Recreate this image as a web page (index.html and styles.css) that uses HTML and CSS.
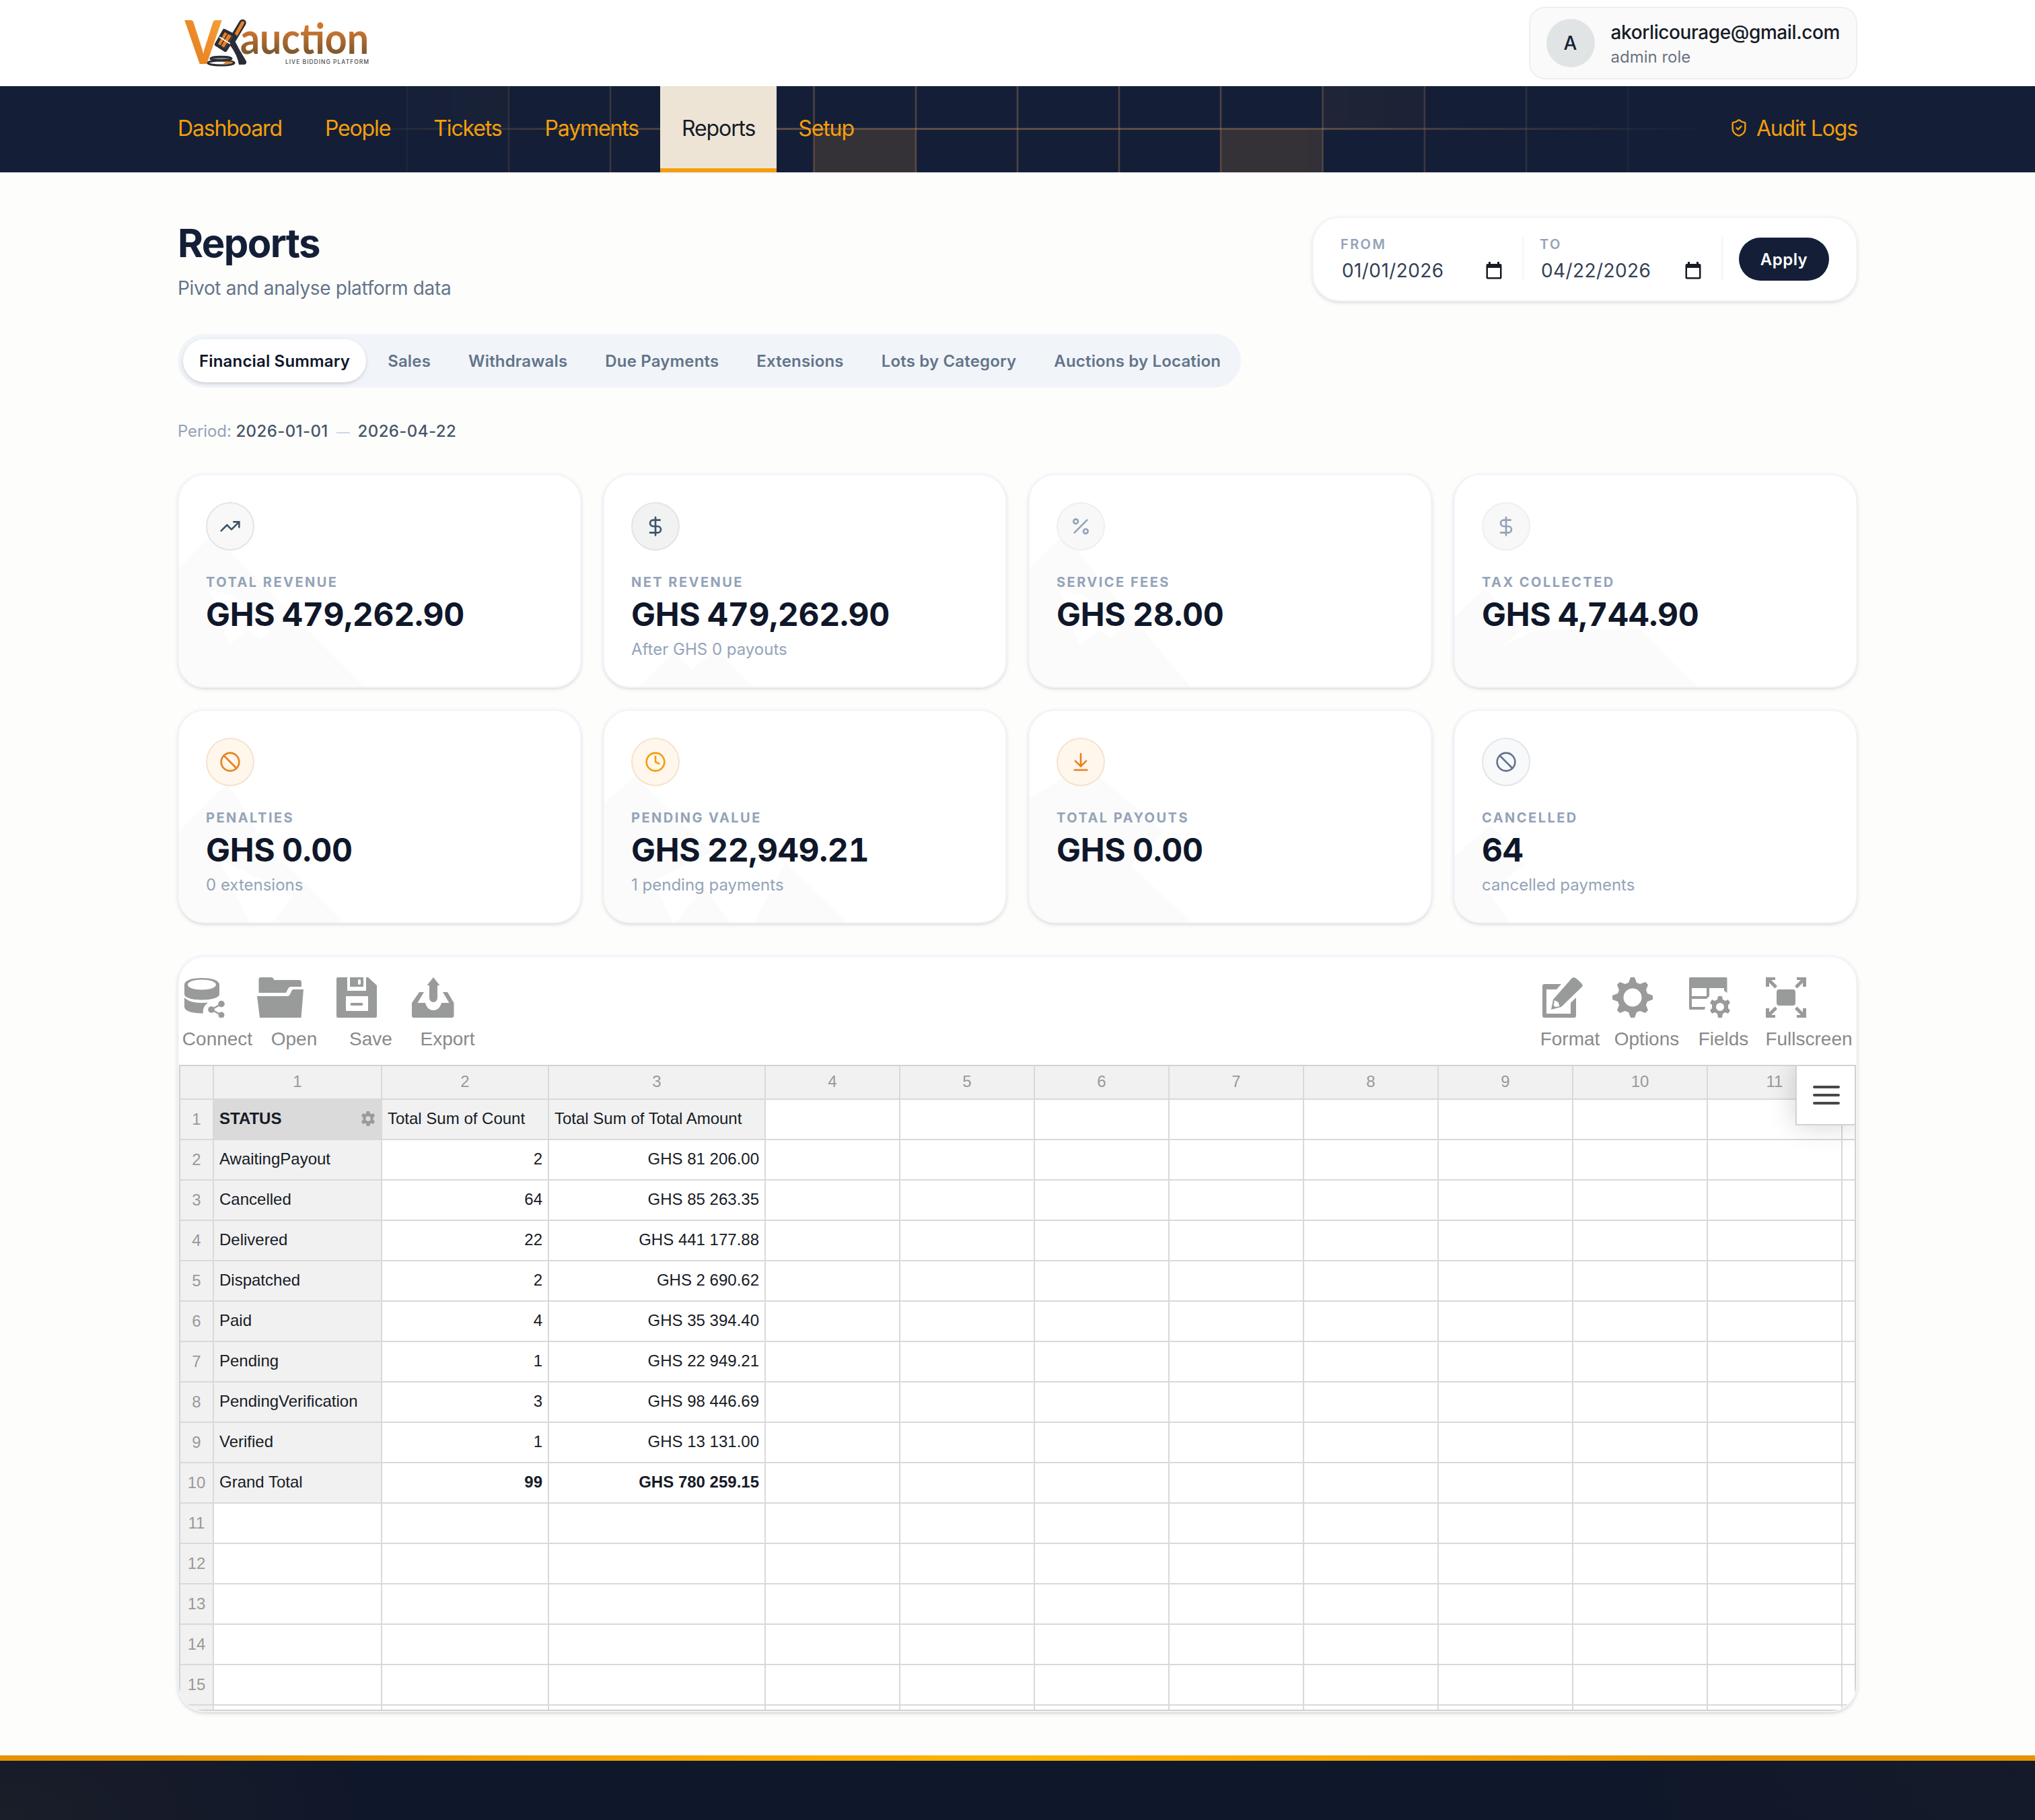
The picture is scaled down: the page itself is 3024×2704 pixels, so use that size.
FILE: index.html
```html
<!DOCTYPE html>
<html lang="en">
<head>
<meta charset="utf-8">
<title>VKauction – Reports</title>
<link rel="stylesheet" href="styles.css">
</head>
<body>
<svg width="0" height="0" class="defs">
  <defs>
    <linearGradient id="gradV" x1="0" y1="1" x2="1" y2="0"><stop offset="0" stop-color="#e07a1c"/><stop offset=".6" stop-color="#f0902c"/><stop offset="1" stop-color="#f6a63c"/></linearGradient>
    <linearGradient id="gradWord" x1="0" y1="0" x2="0" y2="1"><stop offset=".35" stop-color="#cf772f"/><stop offset=".85" stop-color="#76552f"/></linearGradient>
    <symbol id="dollar" viewBox="0 0 24 24"><path d="M12 2v20M17 5H9.5a3.5 3.5 0 0 0 0 7h5a3.5 3.5 0 0 1 0 7H6"/></symbol>
    <symbol id="ban" viewBox="0 0 24 24"><circle cx="12" cy="12" r="10"/><path d="M4.9 4.9l14.2 14.2"/></symbol>
    <symbol id="calendar" viewBox="0 0 24 26"><path fill-rule="evenodd" d="M4 0h3v3h10V0h3v3h1.500a2 2 0 0 1 2 2v18.500a2 2 0 0 1-2 2h-19a2 2 0 0 1-2-2V5a2 2 0 0 1 2-2H4zM3 9v14h18V9z"/></symbol>
  </defs>
</svg>

<header class="topbar">
  <div class="wrap topbar-row">
    <svg class="logo" width="300" height="96" viewBox="0 -8 300 96">
      <text x="11" y="75" class="logo-v" textLength="54" lengthAdjust="spacingAndGlyphs" fill="url(#gradV)">V</text>
      <path d="M77 42 L84 39 Q92 55 102 71 Q103 76 98 76 L91 76 Q89 62 77 46 Z" fill="#2b2d36"/>
      <path d="M96.500 14 L82 38" stroke="#2b2d36" stroke-width="10.500" stroke-linecap="round"/>
      <path d="M96.500 14 L87 31" stroke="#e5822a" stroke-width="5" stroke-linecap="round"/>
      <path d="M69 25 L85 33 L71 55 L57 46 Z" fill="#e5822a" stroke="#2b2d36" stroke-width="4.500" stroke-linejoin="round"/>
      <path d="M75 29 L63 50 M81 33 L69 52" stroke="#2b2d36" stroke-width="1.500"/>
      <path d="M62 35 L78 45" stroke="#fff" stroke-width="1.800"/>
      <ellipse cx="64.500" cy="73.500" rx="19.500" ry="3.500" fill="#fff" stroke="#2b2d36" stroke-width="3"/>
      <path d="M66 76q14 0 16-4l-9-1z" fill="#e5822a"/>
      <ellipse cx="64.500" cy="67" rx="15.500" ry="2.800" fill="#7c7e80" stroke="#2b2d36" stroke-width="3"/>
      <text x="93" y="60" class="logo-word" textLength="191" lengthAdjust="spacingAndGlyphs" fill="url(#gradWord)">auction</text>
      <text x="160" y="75" class="logo-tag" textLength="124">LIVE BIDDING PLATFORM</text>
    </svg>
    <div class="user">
      <div class="avatar">A</div>
      <div class="user-text"><div class="user-mail">akorlicourage@gmail.com</div><div class="user-role">admin role</div></div>
    </div>
  </div>
</header>

<nav class="nav">
  <svg class="nav-grid" viewBox="0 0 3024 128" preserveAspectRatio="none">
    <defs>
      <linearGradient id="fadeX" x1="0" x2="1"><stop offset=".15" stop-color="#fff" stop-opacity="0"/><stop offset=".38" stop-color="#fff"/><stop offset=".64" stop-color="#fff"/><stop offset=".84" stop-color="#fff" stop-opacity="0"/></linearGradient>
      <mask id="fade"><rect width="3024" height="128" fill="url(#fadeX)"/></mask>
    </defs>
    <g mask="url(#fade)">
      <g fill="#f9a23a" fill-opacity=".14"><rect x="1210" y="65" width="151" height="63"/><rect x="1814" y="65" width="151" height="63"/></g>
      <g fill="#f9a23a" fill-opacity=".05"><rect x="605" y="0" width="151" height="63"/><rect x="1966" y="0" width="151" height="63"/></g>
      <path d="M605 0v128M756 0v128M907 0v128M1058 0v128M1209.500 0v128M1361 0v128M1512 0v128M1663 0v128M1814 0v128M1965.500 0v128M2117 0v128M2268 0v128M2419 0v128" stroke="#c08a5a" stroke-opacity=".34" stroke-width="2.500" fill="none"/>
      <path d="M0 63.500h3024" stroke="#c08a5a" stroke-opacity=".42" stroke-width="3"/>
    </g>
  </svg>
  <div class="wrap nav-row">
    <a class="nav-link">Dashboard</a><a class="nav-link">People</a><a class="nav-link">Tickets</a><a class="nav-link">Payments</a><a class="nav-link active">Reports</a><a class="nav-link">Setup</a>
    <a class="audit"><svg width="28" height="28" viewBox="0 0 24 24" fill="none" stroke="currentColor" stroke-width="2" stroke-linecap="round" stroke-linejoin="round"><path d="M20 13c0 5-3.500 7.500-7.660 8.950a1 1 0 0 1-.67-.01C7.500 20.500 4 18 4 13V6a1 1 0 0 1 1-1c2 0 4.500-1.200 6.240-2.720a1.170 1.170 0 0 1 1.520 0C14.510 3.810 17 5 19 5a1 1 0 0 1 1 1z"/><path d="m9 12 2 2 4-4"/></svg>Audit Logs</a>
  </div>
</nav>

<main class="wrap main">
  <section class="head">
    <div><h1 class="title">Reports</h1><p class="subtitle">Pivot and analyse platform data</p></div>
    <div class="range">
      <div class="field"><div class="field-label">FROM</div><div class="field-value"><span>01/01/2026</span><svg width="24" height="26"><use href="#calendar"/></svg></div></div>
      <i class="rule"></i>
      <div class="field"><div class="field-label">TO</div><div class="field-value"><span>04/22/2026</span><svg width="24" height="26"><use href="#calendar"/></svg></div></div>
      <i class="rule"></i>
      <button class="apply">Apply</button>
    </div>
  </section>

  <div class="tabs">
    <a class="tab on">Financial Summary</a><a class="tab">Sales</a><a class="tab">Withdrawals</a><a class="tab">Due Payments</a><a class="tab">Extensions</a><a class="tab">Lots by Category</a><a class="tab">Auctions by Location</a>
  </div>

  <p class="period">Period: <b>2026-01-01</b><span class="dash">—</span><b>2026-04-22</b></p>

  <section class="cards">
    <article class="card hills-a"><div class="badge slate"><svg class="ico" viewBox="0 0 24 24"><path d="M22 7l-8.500 8.500-5-5L2 17"/><path d="M16 7h6v6"/></svg></div><div class="label">TOTAL REVENUE</div><div class="value">GHS 479,262.90</div></article>
    <article class="card hills-b"><div class="badge slate deep"><svg class="ico"><use href="#dollar"/></svg></div><div class="label">NET REVENUE</div><div class="value">GHS 479,262.90</div><div class="note">After GHS 0 payouts</div></article>
    <article class="card hills-c"><div class="badge mute"><svg class="ico" viewBox="0 0 24 24"><path d="M19 5L5 19"/><circle cx="6.500" cy="6.500" r="2.500"/><circle cx="17.500" cy="17.500" r="2.500"/></svg></div><div class="label">SERVICE FEES</div><div class="value">GHS 28.00</div></article>
    <article class="card hills-d"><div class="badge mute"><svg class="ico"><use href="#dollar"/></svg></div><div class="label">TAX COLLECTED</div><div class="value">GHS 4,744.90</div></article>
    <article class="card hills-e"><div class="badge orange"><svg class="ico"><use href="#ban"/></svg></div><div class="label">PENALTIES</div><div class="value">GHS 0.00</div><div class="note">0 extensions</div></article>
    <article class="card hills-f"><div class="badge orange amber"><svg class="ico" viewBox="0 0 24 24"><circle cx="12" cy="12" r="10"/><path d="M12 6v6l4 2"/></svg></div><div class="label">PENDING VALUE</div><div class="value">GHS 22,949.21</div><div class="note">1 pending payments</div></article>
    <article class="card hills-g"><div class="badge orange"><svg class="ico" viewBox="0 0 24 24"><path d="M12 17V3M6 11l6 6 6-6M5 21h14"/></svg></div><div class="label">TOTAL PAYOUTS</div><div class="value">GHS 0.00</div></article>
    <article class="card hills-h"><div class="badge gray"><svg class="ico"><use href="#ban"/></svg></div><div class="label">CANCELLED</div><div class="value">64</div><div class="note">cancelled payments</div></article>
  </section>

  <section class="pivot">
    <div class="toolbar">
      <a class="tool"><svg width="80" height="60" viewBox="0 0 80 60"><path fill-rule="evenodd" d="M8 11C8 5 18 1 34 1s26 4 26 10v14c0 5-11 8.500-26 8.500S8 30 8 25zM34 3.500c-12 0-21 3-21 7.500s9 7.500 21 7.500 21-3 21-7.500-9-7.500-21-7.500z"/><path d="M8 30c4 5 14 8 26 8l9-.5c-6 5-8 10-7 16C20 54 8 50 8 44z"/><circle cx="48" cy="48" r="4.800"/><circle cx="63" cy="39.500" r="4.800"/><circle cx="63" cy="56" r="4.500"/><path d="M63 39.500L48 48l15 8" fill="none" stroke="#999b9a" stroke-width="2.500"/></svg><span>Connect</span></a>
      <a class="tool"><svg width="80" height="60" viewBox="0 0 80 60"><path d="M4.500 23V3a3 3 0 0 1 3-3H22c3 0 5 1 5 4h37c3 0 4 1 4 4v6H53c-3 0-4 1-5 3l-3 6z"/><path d="M2 28h45c2 0 3-1 4-3l3-6c1-1 1-1 3-1h14l-3.500 42H6z"/></svg><span>Open</span></a>
      <a class="tool"><svg width="80" height="60" viewBox="0 0 80 60"><path fill-rule="evenodd" d="M8 0h14v20h28V0h3l13 12v46a2 2 0 0 1-2 2H8a2 2 0 0 1-2-2V2a2 2 0 0 1 2-2zm13 28a1 1 0 0 0-1 1v20a1 1 0 0 0 1 1h31a1 1 0 0 0 1-1V29a1 1 0 0 0-1-1z"/><path fill-rule="evenodd" d="M26 0h20v14H26zM40 3a2 2 0 0 0-2 2v4a2 2 0 0 0 4 0V5a2 2 0 0 0-2-2z"/><rect x="26.500" y="38" width="19" height="4" rx="2"/></svg><span>Save</span></a>
      <a class="tool"><svg width="80" height="60" viewBox="0 0 80 60"><path d="M36 0l9.500 12H42v19a6 6 0 0 1-12 0V12h-3.500zM15 22h7l-9.500 16H24c2 7 6 11 12 11s10-4 12-11h11.500L50 22h7l9.500 16v19a3 3 0 0 1-3 3H7a3 3 0 0 1-3-3V38z"/></svg><span>Export</span></a>
      <div class="spacer"></div>
      <a class="tool"><svg width="80" height="60" viewBox="0 0 80 60"><path d="M19 10h25l-7 8H22v36h36V38l8-8v27a3 3 0 0 1-3 3H19a3 3 0 0 1-3-3V13a3 3 0 0 1 3-3z"/><path fill-rule="evenodd" d="M60 1c3-2 6 0 10 4s7 6 5 9L44 44l-15 4 3-15zM34 34l-1.500 8 3 2 6-1-2-6z"/></svg><span>Format</span></a>
      <a class="tool"><svg width="80" height="60" viewBox="0 0 80 60"><path fill-rule="evenodd" d="M33 0h6l3 8 5 2 8-3 4 4-3 8 2 5 8 3v6l-8 3-2 5 3 8-4 4-8-3-5 2-3 8h-6l-3-8-5-2-8 3-4-4 3-8-2-5-8-3v-6l8-3 2-5-3-8 4-4 8 3 5-2zM36 16.500a13.500 13.500 0 1 0 0 27 13.500 13.500 0 0 0 0-27z"/></svg><span>Options</span></a>
      <a class="tool"><svg width="80" height="60" viewBox="0 0 80 60"><path fill-rule="evenodd" d="M7.500 0H61a1.500 1.500 0 0 1 1.500 1.500V23L58 20v-4H36v12l-4 4H10v12h20l-1 4H7.500A1.500 1.500 0 0 1 6 46.500v-45A1.500 1.500 0 0 1 7.500 0zM10 16v12h22V16z"/><path fill-rule="evenodd" d="M49 28h6l1 5 4 2 4-2 3 5-3 3v5l3 3-3 5-4-2-4 2-1 6h-6l-1-6-4-2-4 2-3-5 3-3v-5l-3-3 3-5 4 2 4-2zM52 38a6 6 0 1 0 0 12 6 6 0 0 0 0-12z"/></svg><span>Fields</span></a>
      <a class="tool wide"><svg width="80" height="60" viewBox="0 0 80 60"><rect x="22" y="18" width="28" height="24" rx="4"/><path d="M6 0h14v4h-6l9 9-3.500 3.500L11 8v6H6zM66 0H52v4h6l-9 9 3.500 3.500L61 8v6h5zM6 60h14v-4h-6l9-9-3.500-3.500L11 52v-6H6zM66 60H52v-4h6l-9-9 3.500-3.500L61 52v-6h5z"/></svg><span>Fullscreen</span></a>
    </div>
    <div class="sheet">
      <table class="grid">
        <colgroup><col class="c0"><col class="c1"><col class="c2"><col class="c3"><col class="cn"><col class="cn"><col class="cn"><col class="cn"><col class="cn"><col class="cn"><col class="cn"><col class="cn"><col class="cl"></colgroup>
        <tr class="top"><th></th><th>1</th><th>2</th><th>3</th><th>4</th><th>5</th><th>6</th><th>7</th><th>8</th><th>9</th><th>10</th><th>11</th><th></th></tr>
        <tr><th>1</th><td class="status"><div class="status-in">STATUS<svg width="22" height="24" viewBox="0 0 24 24"><path fill="#999b9a" fill-rule="evenodd" d="M9.500 0h5l.6 3.600 2 1.100 3.400-1.400 2.500 4.400-2.800 2.300v4l2.800 2.300-2.500 4.400-3.400-1.400-2 1.100-.6 3.600h-5l-.6-3.600-2-1.100-3.400 1.400L1 16.300 3.800 14v-4L1 7.700l2.500-4.400 3.400 1.400 2-1.100zM12 8a4 4 0 1 0 0 8 4 4 0 0 0 0-8z"/></svg></div></td><td class="dim">Total Sum of Count</td><td class="dim">Total Sum of Total Amount</td><td class="blank" colspan="9"></td></tr>
        <tr><th>2</th><td class="dim">AwaitingPayout</td><td>2</td><td>GHS 81 206.00</td><td class="blank" colspan="9"></td></tr>
        <tr><th>3</th><td class="dim">Cancelled</td><td>64</td><td>GHS 85 263.35</td><td class="blank" colspan="9"></td></tr>
        <tr><th>4</th><td class="dim">Delivered</td><td>22</td><td>GHS 441 177.88</td><td class="blank" colspan="9"></td></tr>
        <tr><th>5</th><td class="dim">Dispatched</td><td>2</td><td>GHS 2 690.62</td><td class="blank" colspan="9"></td></tr>
        <tr><th>6</th><td class="dim">Paid</td><td>4</td><td>GHS 35 394.40</td><td class="blank" colspan="9"></td></tr>
        <tr><th>7</th><td class="dim">Pending</td><td>1</td><td>GHS 22 949.21</td><td class="blank" colspan="9"></td></tr>
        <tr><th>8</th><td class="dim">PendingVerification</td><td>3</td><td>GHS 98 446.69</td><td class="blank" colspan="9"></td></tr>
        <tr><th>9</th><td class="dim">Verified</td><td>1</td><td>GHS 13 131.00</td><td class="blank" colspan="9"></td></tr>
        <tr class="total"><th>10</th><td class="dim">Grand Total</td><td>99</td><td>GHS 780 259.15</td><td class="blank" colspan="9"></td></tr>
        <tr><th>11</th><td></td><td></td><td></td><td class="blank" colspan="9"></td></tr>
        <tr><th>12</th><td></td><td></td><td></td><td class="blank" colspan="9"></td></tr>
        <tr><th>13</th><td></td><td></td><td></td><td class="blank" colspan="9"></td></tr>
        <tr><th>14</th><td></td><td></td><td></td><td class="blank" colspan="9"></td></tr>
        <tr><th>15</th><td></td><td></td><td></td><td class="blank" colspan="9"></td></tr>
        <tr><th></th><td></td><td></td><td></td><td class="blank" colspan="9"></td></tr>
      </table>
      <div class="menu"><i></i><i></i><i></i></div>
    </div>
  </section>
</main>
<footer class="footer"></footer>
</body>
</html>
```

FILE: styles.css
```css
* { box-sizing: border-box; }
body { margin: 0; background: #fdfdfb; font-family: Inter, "Liberation Sans", sans-serif; height: 2704px; overflow: hidden; display: flex; flex-direction: column; }
h1, p { margin: 0; }
.defs { position: absolute; }
.wrap { width: 2496px; margin: 0 auto; }

.topbar { background: #fff; height: 128px; flex: none; }
.topbar-row { display: flex; justify-content: space-between; align-items: center; height: 128px; }
.logo { margin-top: -8px; overflow: visible; }
.logo-v { font: 900 90px Lato, sans-serif; }
.logo-word { font: 700 64px Lato, sans-serif; }
.logo-tag { font: 500 8.500px Inter, sans-serif; fill: #4a4c52; }
.user { display: flex; align-items: center; gap: 24px; height: 108px; padding: 0 24px; border: 2px solid #efefef; border-radius: 24px; background: #fafafa; }
.avatar { width: 72px; height: 72px; border-radius: 50%; background: #e0e4e4; color: #141f37; font-weight: 500; font-size: 28px; display: flex; align-items: center; justify-content: center; }
.user-text { padding-top: 2px; }
.user-mail { font-size: 28px; font-weight: 500; line-height: 40px; letter-spacing: -0.4px; color: #171b26; }
.user-role { font-size: 24px; line-height: 34px; color: #6b7280; }

.nav { position: relative; height: 128px; background: #141f37; flex: none; box-shadow: 0 2px 0 #f1f1f4; }
.nav-grid { position: absolute; inset: 0; width: 100%; height: 128px; }
.nav-row { position: relative; display: flex; height: 128px; }
.nav-link { padding: 0 32px; font-size: 32px; line-height: 126px; color: #f59e0b; letter-spacing: -1.130px; height: 128px; }
.nav-link:first-child { padding-left: 0; }
.nav-link.active { background: #ede4d6; color: #171b26; box-shadow: inset 0 -6px 0 #f59e0b; }
.audit { margin-left: auto; display: flex; align-items: center; gap: 12px; font-size: 32px; letter-spacing: -1.150px; color: #f59e0b; height: 124px; }

.main { padding-top: 66px; flex: none; }
.head { display: flex; justify-content: space-between; align-items: flex-end; height: 126px; }
.title { font-size: 58px; line-height: 72px; font-weight: 700; letter-spacing: -1.600px; color: #141f37; margin-bottom: 11px; }
.subtitle { font-size: 28px; line-height: 40px; letter-spacing: -0.320px; color: #64748b; }
.range { display: flex; align-items: center; gap: 24px; height: 126px; padding: 0 40px; border: 2px solid #f1f5f9; border-radius: 40px; background: #fff; box-shadow: 0 2px 6px rgba(0,0,0,.1), 0 2px 4px -2px rgba(0,0,0,.1); }
.field { width: 246px; }
.field-label { font-size: 20px; line-height: 30px; font-weight: 600; letter-spacing: .12em; color: #94a3b8; margin-bottom: 4px; }
.field-value { display: flex; justify-content: space-between; align-items: center; font-size: 28px; line-height: 40px; letter-spacing: .4px; color: #334155; padding: 0 6px 0 2px; }
.field-value svg { fill: #171b26; }
.rule { width: 2px; height: 64px; background: #f1f5f9; }
.apply { width: 134px; height: 64px; border: 0; border-radius: 32px; background: #141f37; color: #fff; font: 600 24px Inter, sans-serif; letter-spacing: .02em; padding: 0; }

.tabs { display: flex; gap: 8px; margin-top: 48px; width: 1580px; height: 80px; padding: 8px; border-radius: 40px; background: #f1f5f9; }
.tab { padding: 1px 24px 0; font-size: 24px; line-height: 64px; height: 64px; font-weight: 600; letter-spacing: .17px; color: #64748b; white-space: nowrap; border-radius: 32px; }
.tab.on { background: #fff; color: #0f172a; box-shadow: 0 2px 6px rgba(0,0,0,.12), 0 2px 4px -2px rgba(0,0,0,.12); }
.period { margin: 48px 0 46px; height: 34px; font-size: 24px; line-height: 34px; color: #94a3b8; letter-spacing: -.1px; }
.period b { font-weight: 500; color: #475569; letter-spacing: .4px; }
.dash { margin: 0 12px; font-size: 20px; line-height: 20px; color: #cbd5e1; }

.cards { display: grid; grid-template-columns: repeat(4, 600px); gap: 32px; grid-auto-rows: 318px; }
.card { position: relative; overflow: hidden; padding: 40px; border: 2px solid #f1f5f9; border-radius: 40px; background: #fff; box-shadow: 0 2px 6px rgba(0,0,0,.1), 0 2px 4px -2px rgba(0,0,0,.1); }
.card::before { content: ""; position: absolute; inset: 0; background: #fbfbfb; }
.card > * { position: relative; }
.hills-a::before { clip-path: polygon(0 138px, 50px 88px, 278px 318px, 0 318px, 0 180px, 45px 170px, 74px 252px, 104px 230px, 121px 244px, 136px 230px, 82px 180px, 45px 170px, 0 180px); }
.hills-b::before { clip-path: polygon(48px 318px, 104px 262px, 130px 290px, 165px 258px, 224px 318px); }
.hills-c::before { clip-path: polygon(0 138px, 50px 88px, 242px 318px, 0 318px, 0 180px, 45px 170px, 74px 252px, 104px 230px, 121px 244px, 136px 230px, 82px 180px, 45px 170px, 0 180px); }
.hills-d::before { clip-path: polygon(0 210px, 45px 168px, 100px 228px, 74px 252px, 120px 230px, 275px 228px, 364px 318px, 0 318px); }
.hills-e::before { clip-path: polygon(0 178px, 72px 108px, 130px 200px, 248px 318px, 136px 318px, 170px 275px, 60px 220px, 107px 318px, 0 318px); }
.hills-f::before { clip-path: polygon(0 138px, 46px 96px, 160px 210px, 74px 252px, 102px 318px, 0 318px, 0 138px, 104px 318px, 148px 262px, 190px 318px, 220px 318px, 270px 225px, 364px 318px, 100px 318px); }
.hills-g::before { clip-path: polygon(0 130px, 82px 80px, 200px 180px, 150px 230px, 245px 318px, 0 318px); }
.hills-h::before { clip-path: polygon(0 215px, 54px 170px, 104px 228px, 50px 270px, 84px 318px, 0 318px); }
.badge { width: 72px; height: 72px; border: 2px solid; border-radius: 50%; display: flex; align-items: center; justify-content: center; margin-bottom: 32px; }
.ico { width: 32px; height: 32px; fill: none; stroke: currentColor; stroke-width: 2; stroke-linecap: round; stroke-linejoin: round; }
.slate { background: #f8f8f8; border-color: #e2e5e8; color: #3f5568; }
.deep { background: #f1f2f2; }
.mute { background: #f8f8f8; border-color: #efefef; color: #94a3b8; }
.gray { background: #f8f9fa; border-color: #e2e6ea; color: #64748b; }
.orange { background: #fff6ec; border-color: #f5e3cf; color: #e8821c; }
.amber { color: #f59e0b; }
.label { font-size: 20px; line-height: 30px; font-weight: 700; letter-spacing: 2.460px; color: #94a3b8; margin-bottom: 3px; }
.value { font-size: 48px; line-height: 60px; font-weight: 700; letter-spacing: -0.3px; word-spacing: -2px; font-variant-numeric: tabular-nums; color: #0f172a; margin-bottom: 6px; }
.note { font-size: 24px; line-height: 32px; color: #94a3b8; }

.pivot { margin-top: 48px; height: 1124px; border: 2px solid #f1f5f9; border-radius: 40px; background: #fff; overflow: hidden; box-shadow: 0 2px 6px rgba(0,0,0,.12), 0 2px 4px -2px rgba(0,0,0,.12); font-family: "Liberation Sans", Arial, sans-serif; }
.toolbar { display: flex; height: 160px; padding-top: 30px; }
.tool { width: 114px; display: flex; flex-direction: column; gap: 16px; font-size: 28px; line-height: 32px; color: #888a8c; }
.tool.wide { width: 140px; }
.tool svg { fill: #999b9a; display: block; }
.tool span { text-align: center; }
.spacer { flex: 1; }
.sheet { position: relative; height: 960px; border: 2px solid #d0d2d5; overflow: hidden; }
.grid { border-collapse: separate; border-spacing: 0; table-layout: fixed; width: 2490px; font-size: 24px; color: #171b26; }
.c0 { width: 50px; } .c1 { width: 250px; } .c2 { width: 248px; } .c3 { width: 322px; } .cn { width: 200px; } .cl { width: 20px; }
.grid th, .grid td { height: 60px; padding: 0 8px 2px; border-right: 2px solid #d9d9d9; border-bottom: 2px solid #d9d9d9; text-align: right; line-height: 28px; }
.grid th { background: #f1f1f1; color: #999; font-weight: 400; text-align: center; padding: 0; }
.grid .top th { height: 50px; padding-bottom: 2px; }
.grid .dim { background: #f1f1f1; text-align: left; white-space: nowrap; }
.grid .status { background: #dadada; border-color: #dadada; font-weight: 700; text-align: left; }
.status-in { display: flex; justify-content: space-between; align-items: center; }
.grid .blank { padding: 0; background: repeating-linear-gradient(90deg, transparent 0 198px, #d9d9d9 198px 200px); }
.total td:nth-child(n+3) { font-weight: 700; }
.menu { position: absolute; top: -2px; right: -2px; width: 90px; height: 90px; background: #fff; border: 2px solid #d0d2d5; box-shadow: 0 0 40px rgba(0,0,0,.18); display: flex; flex-direction: column; align-items: center; justify-content: center; gap: 8px; padding-left: 2px; }
.menu i { width: 40px; height: 4px; border-radius: 2px; background: #48484c; }

.footer { margin-top: 64px; flex: 1; border-top: 8px solid; border-image: linear-gradient(90deg, #e89200, #e89200 8%, #ffb300 50%, #e89200 85%) 1; background: radial-gradient(ellipse 560px 300px at 0 100%, rgba(245,158,11,.05), transparent), radial-gradient(ellipse 640px 400px at 100% 0, rgba(245,158,11,.025), transparent), #0f172a; }
```
